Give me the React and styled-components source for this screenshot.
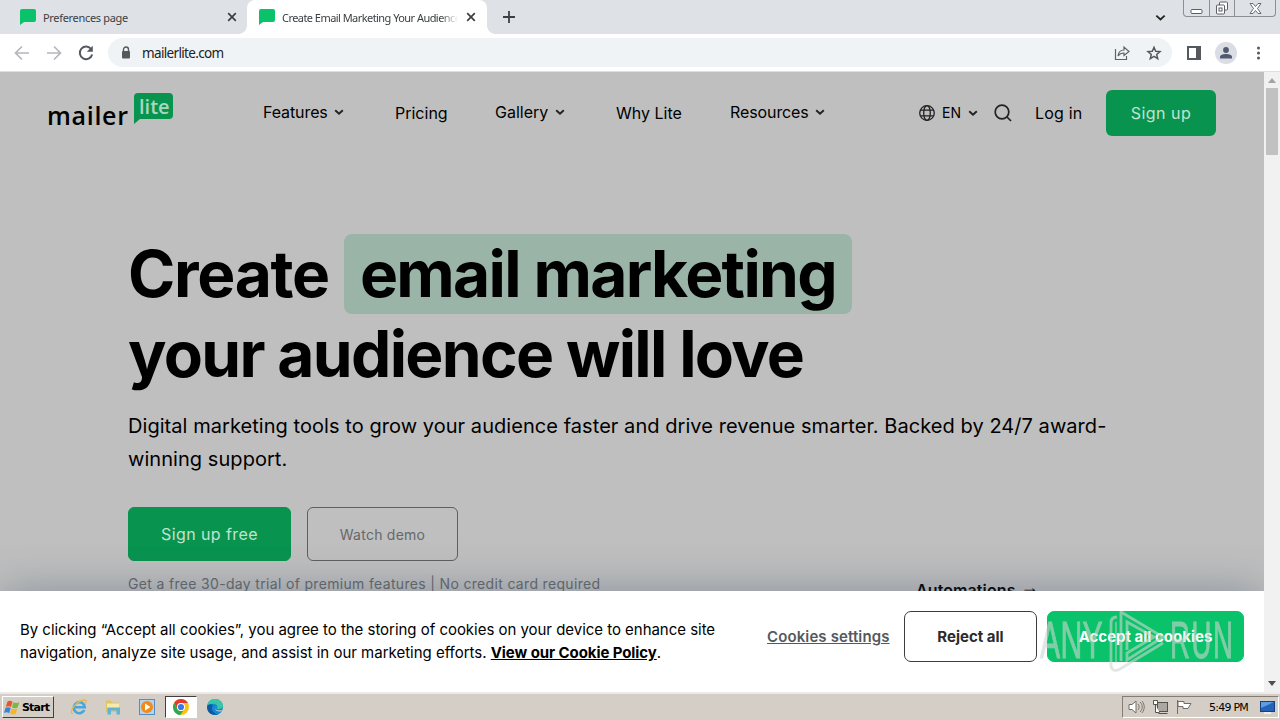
import styled, { createGlobalStyle } from "styled-components";

const GlobalStyle = createGlobalStyle`
  * {
    box-sizing: border-box;
  }
  body {
    margin: 0;
    overflow: hidden;
    font-family: Inter, "Liberation Sans", sans-serif;
    color: #000;
  }
  h1, p {
    margin: 0;
  }
  svg {
    display: block;
    flex-shrink: 0;
  }
`;

const Screen = styled.div`
  width: 1280px;
  height: 720px;
  display: flex;
  flex-direction: column;
  position: relative;
  overflow: hidden;
  background-color: #fff;
`;

// browser tabs
const TabStrip = styled.div`
  height: 34px;
  display: flex;
  background-color: #dee1e6;
  flex-shrink: 0;
`;
const Tab = styled.div`
  width: ${(props) => props.$width};
  height: 34px;
  display: flex;
  align-items: center;
  padding-left: ${(props) => props.$left};
  background-color: ${(props) => (props.$active ? "#fff" : "transparent")};
  border-radius: 8px 8px 0 0;
  position: relative;
  &::before,
  &::after {
    content: "";
    display: ${(props) => (props.$active ? "block" : "none")};
    position: absolute;
    bottom: 0;
    width: 8px;
    height: 8px;
  }
  &::before {
    left: -8px;
    background: radial-gradient(circle at 0 0, transparent 7.5px, #fff 8px);
  }
  &::after {
    right: -8px;
    background: radial-gradient(circle at 100% 0, transparent 7.5px, #fff 8px);
  }
`;
const TabTitle = styled.span`
  width: ${(props) => props.$width};
  margin-left: 7px;
  margin-right: 8px;
  overflow: hidden;
  white-space: nowrap;
  font-family: "Noto Sans", sans-serif;
  font-size: 11px;
  letter-spacing: ${(props) => props.$spacing};
  color: #3c4043;
  mask-image: ${(props) => (props.$fade ? "linear-gradient(90deg, #000 90%, transparent)" : "none")};
`;
const TabSpacer = styled.div`
  flex: 1;
`;
const TabControl = styled.div`
  display: flex;
  align-items: center;
  padding-left: ${(props) => props.$left};
  padding-right: ${(props) => props.$right};
`;
const WindowButtons = styled.div`
  width: 93px;
  height: 17px;
  margin-right: 4px;
  display: grid;
  grid-template-columns: 25px 25px 1fr;
  border: 1px solid #8a8e96;
  border-top: 0;
  border-radius: 0 0 4px 4px;
`;
const WindowButton = styled.div`
  display: flex;
  align-items: center;
  justify-content: center;
  border-left: ${(props) => (props.$first ? "0" : "1px solid #8a8e96")};
`;

// address bar
const Toolbar = styled.div`
  height: 38px;
  display: flex;
  align-items: center;
  padding-left: 13px;
  border-bottom: 1px solid #dcdee0;
  flex-shrink: 0;
`;
const NavIcons = styled.div`
  width: 95px;
  display: flex;
  gap: 14px;
`;
const AddressBar = styled.div`
  width: 1064px;
  height: 29px;
  display: flex;
  align-items: center;
  padding: 0 9px 0 12px;
  border-radius: 15px;
  background-color: #f0f3f5;
`;
const Url = styled.span`
  flex: 1;
  margin-left: 10px;
  font-family: "Noto Sans", sans-serif;
  font-size: 13.5px;
  letter-spacing: -0.65px;
  color: #202124;
`;
const BarActions = styled.div`
  display: flex;
  gap: 14px;
`;
const ToolActions = styled.div`
  display: flex;
  align-items: center;
  margin-left: 12px;
  gap: 11px;
`;
const Avatar = styled.div`
  width: 22px;
  height: 22px;
  border-radius: 50%;
  display: flex;
  align-items: center;
  justify-content: center;
  background-color: #dadde3;
`;

// page
const Viewport = styled.div`
  height: 620px;
  display: flex;
  flex-shrink: 0;
`;
const Page = styled.main`
  width: 1264px;
  height: 620px;
  position: relative;
  overflow: hidden;
  background-color: #bfbfbf;
`;
const ScrollBar = styled.div`
  width: 16px;
  display: flex;
  flex-direction: column;
  align-items: center;
  padding-top: 6px;
  padding-bottom: 6px;
  background-color: #f1f1f1;
`;
const ScrollThumb = styled.div`
  width: 12px;
  height: 67px;
  margin-top: 5px;
  margin-bottom: auto;
  background-color: #c1c1c1;
`;
const Header = styled.header`
  height: 82px;
  display: flex;
  align-items: center;
  padding-left: 48px;
`;
const Logo = styled.div`
  width: 215px;
  display: flex;
  font-family: "Open Sans", "Noto Sans", sans-serif;
`;
const LogoText = styled.span`
  width: 87px;
  margin-top: 3px;
  margin-left: -1px;
  font-size: 25px;
  line-height: 32px;
  font-weight: 600;
  letter-spacing: 0.7px;
`;
const LogoBubble = styled.div`
  position: relative;
  width: 40px;
  height: 32px;
  margin-top: -3px;
`;
const LogoLite = styled.span`
  position: absolute;
  left: 5px;
  top: 0;
  font-size: 20px;
  line-height: 27px;
  font-weight: 600;
  color: #a8d7bd;
`;
const NavItem = styled.a`
  width: ${(props) => props.$width};
  display: flex;
  align-items: center;
  gap: ${(props) => props.$gap || "6px"};
  padding-bottom: ${(props) => (props.$down ? "0" : "2px")};
  font-size: ${(props) => props.$size || "16px"};
  line-height: 20px;
  letter-spacing: ${(props) => props.$spacing || "0"};
  white-space: nowrap;
`;
const SignUp = styled.a`
  width: 110px;
  height: 46px;
  border-radius: 6px;
  background-color: #08934f;
  color: #c0e3d1;
  font-size: 16px;
  line-height: 47px;
  letter-spacing: 0.5px;
  text-align: center;
`;

const Hero = styled.section`
  padding: 80px 0 0 128px;
`;
const Title = styled.h1`
  font-size: 64px;
  line-height: 80px;
  font-weight: 700;
  white-space: nowrap;
`;
const TitleRow = styled.span`
  display: flex;
  letter-spacing: ${(props) => props.$spacing};
`;
const Highlight = styled.span`
  width: 508px;
  height: 80px;
  margin-left: 15px;
  padding-left: 16px;
  border-radius: 8px;
  background-color: #9ab5a7;
  letter-spacing: -1.66px;
`;
const Lead = styled.p`
  width: 1000px;
  margin-top: 16px;
  font-size: 20px;
  line-height: 33px;
  letter-spacing: 0.055px;
`;
const Actions = styled.div`
  display: flex;
  gap: 16px;
  margin-top: 31px;
`;
const HeroButton = styled.a`
  width: ${(props) => (props.$primary ? "163px" : "151px")};
  height: 54px;
  border: 1px solid ${(props) => (props.$primary ? "#08934f" : "#5e5f62")};
  border-radius: 6px;
  background-color: ${(props) => (props.$primary ? "#08934f" : "transparent")};
  color: ${(props) => (props.$primary ? "#c0e3d1" : "#66686a")};
  font-size: ${(props) => (props.$primary ? "16px" : "14px")};
  letter-spacing: ${(props) => (props.$primary ? "0.4px" : "0.25px")};
  line-height: 53px;
  text-align: center;
`;
const Below = styled.div`
  display: flex;
  margin-top: 13px;
`;
const TrialNote = styled.p`
  width: 788px;
  font-size: 14px;
  line-height: 20px;
  letter-spacing: 0.33px;
  color: #66686a;
`;
const Automations = styled.p`
  display: flex;
  gap: 5px;
  padding-top: 6px;
  font-size: 16px;
  line-height: 20px;
  font-weight: 600;
  letter-spacing: 0.1px;
`;
const Arrow = styled.span`
  margin-top: -3px;
  font-family: "Liberation Sans", sans-serif;
  font-size: 18px;
  font-weight: 700;
`;

// cookie consent
const CookieBar = styled.aside`
  position: absolute;
  left: 0;
  bottom: 0;
  width: 1264px;
  height: 101px;
  display: flex;
  padding: 20px 20px 0;
  background-color: #fff;
  box-shadow: 0 0 44px rgba(60, 80, 105, 0.42);
`;
const CookieText = styled.p`
  width: 747px;
  flex-shrink: 0;
  padding-top: 7px;
  font-size: 15px;
  line-height: 23px;
  white-space: nowrap;
`;
const CookieLine = styled.span`
  display: block;
  letter-spacing: ${(props) => props.$spacing || "0"};
`;
const PolicyLink = styled.a`
  font-weight: 700;
  letter-spacing: -0.08px;
  text-decoration: underline;
`;
const SettingsLink = styled.a`
  width: 137px;
  flex-shrink: 0;
  font-size: 15px;
  letter-spacing: 0.12px;
  line-height: 51px;
  font-weight: 600;
  color: #55585c;
  text-decoration: underline;
  white-space: nowrap;
`;
const CookieButton = styled.a`
  width: ${(props) => (props.$primary ? "197px" : "133px")};
  flex-shrink: 0;
  height: 51px;
  margin-right: ${(props) => (props.$primary ? "0" : "10px")};
  border: 1px solid ${(props) => (props.$primary ? "#09c269" : "#3d3d40")};
  border-radius: 7px;
  background-color: ${(props) => (props.$primary ? "#09c269" : "#fff")};
  color: ${(props) => (props.$primary ? "#fff" : "#2b2b2d")};
  font-size: 15px;
  line-height: 49px;
  font-weight: 700;
  text-align: center;
`;

// watermark
const Watermark = styled.div`
  position: absolute;
  left: 1040px;
  top: 608px;
  width: 194px;
  height: 66px;
  opacity: 0.6;
  color: #d0d6d3;
`;
const WatermarkText = styled.span`
  position: absolute;
  left: ${(props) => props.$left};
  top: 4px;
  font-family: "Liberation Sans", sans-serif;
  font-size: 52px;
  line-height: 56px;
  letter-spacing: ${(props) => props.$spacing};
  -webkit-text-stroke: 1px #d0d6d3;
  transform: scaleX(${(props) => props.$scale});
  transform-origin: 0 0;
`;

// taskbar
const TaskBar = styled.footer`
  height: 28px;
  display: flex;
  align-items: center;
  padding-left: 2px;
  border-top: 2px solid #eeece8;
  background-color: #d4cec6;
  font-family: "DejaVu Sans", sans-serif;
`;
const StartButton = styled.div`
  width: 52px;
  height: 22px;
  display: flex;
  align-items: center;
  gap: 1px;
  padding-left: 1px;
  border: 1px solid;
  border-color: #fff #404040 #404040 #fff;
  font-size: 11px;
  font-weight: 700;
  letter-spacing: -0.8px;
`;
const TaskIcon = styled.div`
  width: 32px;
  height: 22px;
  margin-right: 2px;
  display: flex;
  align-items: center;
  justify-content: center;
  border: 1px solid;
  border-color: ${(props) => (props.$active ? "#404040 #fff #fff #404040" : "transparent")};
  background-color: ${(props) => (props.$active ? "#fff" : "transparent")};
`;
const TaskIcons = styled.div`
  display: flex;
  flex: 1;
  padding-left: 9px;
`;
const Tray = styled.div`
  width: 157px;
  height: 22px;
  display: flex;
  align-items: center;
  padding-left: 5px;
  margin-right: 1px;
  border: 1px solid;
  border-color: #827d76 #fff #fff #827d76;
`;
const Clock = styled.span`
  width: 51px;
  margin-left: 16px;
  font-family: "DejaVu Sans", sans-serif;
  font-size: 11px;
  letter-spacing: -0.75px;
  white-space: nowrap;
`;
const TrayIcons = styled.div`
  display: flex;
  gap: 7px;
`;

const Favicon = () => (
  <svg width="16" height="16" viewBox="0 0 16 16">
    <path d="M2 0h12a2 2 0 0 1 2 2v9a2 2 0 0 1-2 2H4l-4 3V2a2 2 0 0 1 2-2z" fill="#09c269" />
  </svg>
);

const CloseIcon = () => (
  <svg width="10" height="10" viewBox="0 0 10 10" stroke="#3c4043" strokeWidth="1.7">
    <path d="M1.2 1.2l7.6 7.6M8.8 1.2L1.2 8.8" />
  </svg>
);

const Chevron = ({ size = 10, width = 1.9 }) => (
  <svg width={size} height={size} viewBox="0 0 10 10" fill="none" stroke="#222" strokeWidth={width}>
    <path d="M1.2 3.2L5 6.800l3.800-3.600" />
  </svg>
);

const ArrowIcon = ({ flip }) => (
  <svg width="18" height="18" viewBox="0 0 18 18" fill="none" stroke="#b5b7ba" strokeWidth="1.7">
    <path d={flip ? "M2 9h13M9 2.500l6.500 6.500-6.500 6.500" : "M16 9H3M9 2.500L2.500 9 9 15.500"} />
  </svg>
);

function BrowserTabs() {
  return (
    <TabStrip>
      <Tab $width="247px" $left="20px">
        <Favicon />
        <TabTitle $width="176px" $spacing="-0.32px">Preferences page</TabTitle>
        <CloseIcon />
      </Tab>
      <Tab $active $width="240px" $left="12px">
        <Favicon />
        <TabTitle $fade $width="176px" $spacing="-0.55px">
          Create Email Marketing Your Audience
        </TabTitle>
        <CloseIcon />
      </Tab>
      <TabControl $left="15px" $right="0">
        <svg width="14" height="14" viewBox="0 0 14 14" stroke="#3c4043" strokeWidth="1.8">
          <path d="M7 1v12M1 7h12" />
        </svg>
      </TabControl>
      <TabSpacer />
      <TabControl $left="0" $right="17px">
        <Chevron size={11} width={1.6} />
      </TabControl>
      <WindowButtons>
        <WindowButton $first>
          <svg width="13" height="14" viewBox="0 0 13 14">
            <rect x="1" y="8.500" width="11" height="4" rx="1" fill="#fff" stroke="#5b5e66" />
          </svg>
        </WindowButton>
        <WindowButton>
          <svg width="14" height="14" viewBox="0 0 14 14" fill="#fff" stroke="#5b5e66">
            <rect x="4.500" y="1" width="8" height="8" rx="1" />
            <rect x="1.500" y="4" width="8" height="9" rx="1" />
            <rect x="4" y="7" width="3" height="3" />
          </svg>
        </WindowButton>
        <WindowButton>
          <svg width="13" height="13" viewBox="0 0 13 13" fill="#fff" stroke="#5b5e66" strokeWidth="0.9">
            <path d="M1 1.500h3l2.500 3 2.500-3h3L8.500 6.500l3.500 5H9L6.500 8.500 4 11.500H1l3.500-5z" />
          </svg>
        </WindowButton>
      </WindowButtons>
    </TabStrip>
  );
}

function AddressToolbar() {
  return (
    <Toolbar>
      <NavIcons>
        <ArrowIcon />
        <ArrowIcon flip />
        <svg width="18" height="18" viewBox="0 0 18 18">
          <path d="M14.300 5.200A6.300 6.300 0 1 0 15.200 10.500" fill="none" stroke="#55585c" strokeWidth="2" />
          <path d="M15.800 1.800v6h-6z" fill="#55585c" />
        </svg>
      </NavIcons>
      <AddressBar>
        <svg width="12" height="14" viewBox="0 0 12 14">
          <rect x="2" y="5" width="8" height="7.500" rx="1" fill="#55585c" />
          <path d="M3.500 6V3.500a2.500 2.500 0 0 1 5 0V6" fill="none" stroke="#55585c" strokeWidth="1.400" />
        </svg>
        <Url>mailerlite.com</Url>
        <BarActions>
          <svg width="18" height="18" viewBox="0 0 18 18" fill="none" stroke="#5f6368" strokeWidth="1.200">
            <path d="M2.500 5v10.500h11V12M5 12c.5-4 2.500-6 6-6V3l5 4.500-5 4V9c-3 0-4.500.8-6 3z" />
          </svg>
          <svg width="18" height="18" viewBox="0 0 18 18" fill="none" stroke="#55585c" strokeWidth="1.500">
            <path d="M9 3.300l1.700 4 4.300.3-3.300 2.900 1 4.200L9 12.400l-3.700 2.300 1-4.200L3 7.600l4.300-.3z" />
          </svg>
        </BarActions>
      </AddressBar>
      <ToolActions>
        <svg width="20" height="16" viewBox="0 0 20 16">
          <path d="M4 2h12v12H4z" fill="none" stroke="#55585c" strokeWidth="2" />
          <path d="M12 1h5v14h-5z" fill="#55585c" />
        </svg>
        <Avatar>
          <svg width="14" height="14" viewBox="0 0 14 14" fill="#505a70">
            <circle cx="7" cy="4" r="2.900" />
            <path d="M1 12.500v-1.500C1 8.800 4.500 8 7 8s6 .8 6 3v1.500z" />
          </svg>
        </Avatar>
        <svg width="22" height="16" viewBox="0 0 22 16" fill="#55585c">
          <circle cx="10.500" cy="3" r="1.500" />
          <circle cx="10.500" cy="8" r="1.500" />
          <circle cx="10.500" cy="13" r="1.500" />
        </svg>
      </ToolActions>
    </Toolbar>
  );
}

function SiteHeader() {
  return (
    <Header>
      <Logo>
        <LogoText>mailer</LogoText>
        <LogoBubble>
          <svg width="40" height="32" viewBox="0 0 40 32">
            <path d="M4 0h31a4 4 0 0 1 4 4v18a4 4 0 0 1-4 4H6l-6 5V4a4 4 0 0 1 4-4z" fill="#08934f" />
          </svg>
          <LogoLite>lite</LogoLite>
        </LogoBubble>
      </Logo>
      <NavItem $width="132px" $spacing="-0.1px">
        Features <Chevron />
      </NavItem>
      <NavItem $width="100px" $down>Pricing</NavItem>
      <NavItem $width="121px" $gap="7px">
        Gallery <Chevron />
      </NavItem>
      <NavItem $width="114px" $down>Why Lite</NavItem>
      <NavItem $width="189px" $spacing="-0.1px">
        Resources <Chevron />
      </NavItem>
      <NavItem $width="75px" $size="14px" $gap="7px" $down>
        <svg width="16" height="16" viewBox="0 0 16 16" fill="none" stroke="#222" strokeWidth="1.300">
          <circle cx="8" cy="8" r="7.300" />
          <ellipse cx="8" cy="8" rx="3.300" ry="7.300" />
          <path d="M1.500 5.200h13M1.500 10.800h13" />
        </svg>
        EN <Chevron />
      </NavItem>
      <NavItem $width="41px" $down>
        <svg width="18" height="18" viewBox="0 0 18 18" fill="none" stroke="#222" strokeWidth="1.700">
          <circle cx="8" cy="8" r="6.800" />
          <path d="M13 13l4 4" />
        </svg>
      </NavItem>
      <NavItem $width="71px" $spacing="0.2px" $down>Log in</NavItem>
      <SignUp>Sign up</SignUp>
    </Header>
  );
}

function CookieConsent() {
  return (
    <CookieBar>
      <CookieText>
        <CookieLine $spacing="-0.03px">
          By clicking “Accept all cookies”, you agree to the storing of cookies on your device to enhance site
        </CookieLine>
        <CookieLine $spacing="-0.01px">
          navigation, analyze site usage, and assist in our marketing efforts.{" "}
          <PolicyLink>View our Cookie Policy</PolicyLink>.
        </CookieLine>
      </CookieText>
      <SettingsLink>Cookies settings</SettingsLink>
      <CookieButton>Reject all</CookieButton>
      <CookieButton $primary>Accept all cookies</CookieButton>
    </CookieBar>
  );
}

function WindowsBar() {
  return (
    <TaskBar>
      <StartButton>
        <svg width="17" height="17" viewBox="0 0 17 17">
          <path d="M3.500 2.500C5 1.500 7 1.500 8.500 2.800L7 8C5.500 7 3.500 7 1.800 7.800z" fill="#e8562b" />
          <path d="M9.300 3.200c2 1 4 1 6 0L13.600 8.500c-2 1-4 .8-5.600 0z" fill="#78b943" />
          <path d="M1.500 8.800c1.600-.8 3.700-.8 5.200.2L5.200 14.200C3.700 13 1.500 13 0 14z" fill="#3b83d6" />
          <path d="M7.600 9.400c1.800.9 3.800 1 5.800 0L11.800 14.700c-2 1-4 .9-5.600 0z" fill="#f5b81f" />
        </svg>
        Start
      </StartButton>
      <TaskIcons>
        <TaskIcon>
          <svg width="18" height="18" viewBox="0 0 18 18" fill="none">
            <path d="M14.300 12A5.500 5.500 0 1 1 14.800 9.300H5" stroke="#45a7df" strokeWidth="2.600" />
            <path d="M2.500 15.800C-1.500 14 6 3 14 2c2.500-.2 2.500 1.500 1.700 3.200" stroke="#e9b840" strokeWidth="1.300" />
          </svg>
        </TaskIcon>
        <TaskIcon>
          <svg width="16" height="16" viewBox="0 0 16 16">
            <path d="M1 1.500h5l1 2h7V13H1z" fill="#dfc464" />
            <path d="M2 4.500h12V9H2z" fill="#f8eaa8" />
            <path d="M2.500 8.500h12.500v7h-3.500v-4H6v4H2.500z" fill="#62b3d6" />
          </svg>
        </TaskIcon>
        <TaskIcon>
          <svg width="16" height="16" viewBox="0 0 16 16">
            <rect x="0.500" y="0.500" width="15" height="15" fill="#b7d2ec" stroke="#568cc4" />
            <circle cx="8" cy="8" r="6" fill="#f28b16" />
            <path d="M6 4.500l5.500 3.500L6 11.500z" fill="#fff" />
          </svg>
        </TaskIcon>
        <TaskIcon $active>
          <svg width="16" height="16" viewBox="0 0 16 16">
            <circle cx="8" cy="8" r="8" fill="#fbc116" />
            <path d="M1.100 4A8 8 0 0 1 14.900 4H8a4 4 0 0 0-3.500 6z" fill="#e33b2e" />
            <path d="M1.100 4A8 8 0 0 0 7.200 16l4.300-6A4 4 0 0 1 4.500 10z" fill="#2da94f" />
            <circle cx="8" cy="8" r="4" fill="#fff" />
            <circle cx="8" cy="8" r="3.100" fill="#3b78e7" />
          </svg>
        </TaskIcon>
        <TaskIcon>
          <svg width="16" height="16" viewBox="0 0 16 16">
            <circle cx="8" cy="8" r="8" fill="#1688cf" />
            <path d="M.2 7C1 2.500 4 0 8 0c5 0 8 3.500 8 6.500 0 3-3 4-6 3.200C11.500 7 9 4.500 6 4.800 3 5 1 6 .2 7z" fill="#37c6a6" />
            <path d="M6 6c-3 4 0 8.500 5 9.400C5 17 0 13.500.1 8 .3 5 4 4.500 6 6z" fill="#0c59a4" />
            <path d="M9 7c-2 3 1 5.500 6 4l-1 1.200c-4 1-7-1.200-5-5.200z" fill="#d4cec6" />
          </svg>
        </TaskIcon>
      </TaskIcons>
      <Tray>
        <TrayIcons>
          <svg width="17" height="16" viewBox="0 0 17 16" fill="#fff" stroke="#706c67">
            <path d="M1 5.500h3L8 2v12L4 10.500H1z" />
            <path d="M10 5c1.500 2 1.500 4 0 6M12 3c3 3 3 7 0 10M14 2c3 4 3 8 0 12" fill="none" strokeWidth="0.900" />
          </svg>
          <svg width="17" height="16" viewBox="0 0 17 16" fill="#fff" stroke="#55524e">
            <rect x="5.500" y="3.500" width="10" height="9" fill="#aaa7a2" />
            <path d="M6.500 14.500h9M1.500 1.500h4v4h-4zM3.500 6v7.500h4" />
          </svg>
          <svg width="17" height="16" viewBox="0 0 17 16" fill="#fff" stroke="#706c67">
            <path d="M1.500 1v14M2 2.500h6v2h7l-3 5H7v-2H2z" />
          </svg>
        </TrayIcons>
        <Clock>5:49 PM</Clock>
        <svg width="15" height="15" viewBox="0 0 15 15">
          <rect x="0.500" y="1.500" width="14" height="10" fill="#2463b9" stroke="#17407c" />
          <path d="M1 2h13L1 8z" fill="#5d9ee2" />
          <path d="M4 13h7" stroke="#eee" strokeWidth="2" />
        </svg>
      </Tray>
    </TaskBar>
  );
}

function App() {
  return (
    <>
      <GlobalStyle />
      <Screen>
        <BrowserTabs />
        <AddressToolbar />
        <Viewport>
          <Page>
            <SiteHeader />
            <Hero>
              <Title>
                <TitleRow $spacing="-1.3px">
                  Create <Highlight>email marketing</Highlight>
                </TitleRow>
                <TitleRow $spacing="-1.67px">your audience will love</TitleRow>
              </Title>
              <Lead>
                Digital marketing tools to grow your audience faster and drive revenue smarter. Backed by 24/7
                award-winning support.
              </Lead>
              <Actions>
                <HeroButton $primary>Sign up free</HeroButton>
                <HeroButton>Watch demo</HeroButton>
              </Actions>
              <Below>
                <TrialNote>Get a free 30-day trial of premium features | No credit card required</TrialNote>
                <Automations>
                  Automations <Arrow>→</Arrow>
                </Automations>
              </Below>
            </Hero>
            <CookieConsent />
          </Page>
          <ScrollBar>
            <svg width="8" height="5" viewBox="0 0 8 5" fill="#a3a3a3">
              <path d="M0 5l4-5 4 5z" />
            </svg>
            <ScrollThumb />
            <svg width="8" height="5" viewBox="0 0 8 5" fill="#505050">
              <path d="M0 0h8L4 5z" />
            </svg>
          </ScrollBar>
        </Viewport>
        <WindowsBar />
        <Watermark>
          <WatermarkText $left="0" $scale="0.58" $spacing="0.5px">ANY</WatermarkText>
          <svg width="194" height="66" viewBox="0 0 194 66" fill="none" stroke="#d0d6d3" strokeWidth="2.800">
            <path d="M77 9c-4 0-6 2-6 6v42c0 5 4 7 9 4l43-26" />
            <path d="M76 14v41" strokeWidth="1.500" />
            <path d="M81 4l42 25-36 23v-7l27-16-27-15v28" />
            <path d="M81 3v50" />
          </svg>
          <WatermarkText $left="130px" $scale="0.53" $spacing="3px">RUN</WatermarkText>
        </Watermark>
      </Screen>
    </>
  );
}

export default App;
